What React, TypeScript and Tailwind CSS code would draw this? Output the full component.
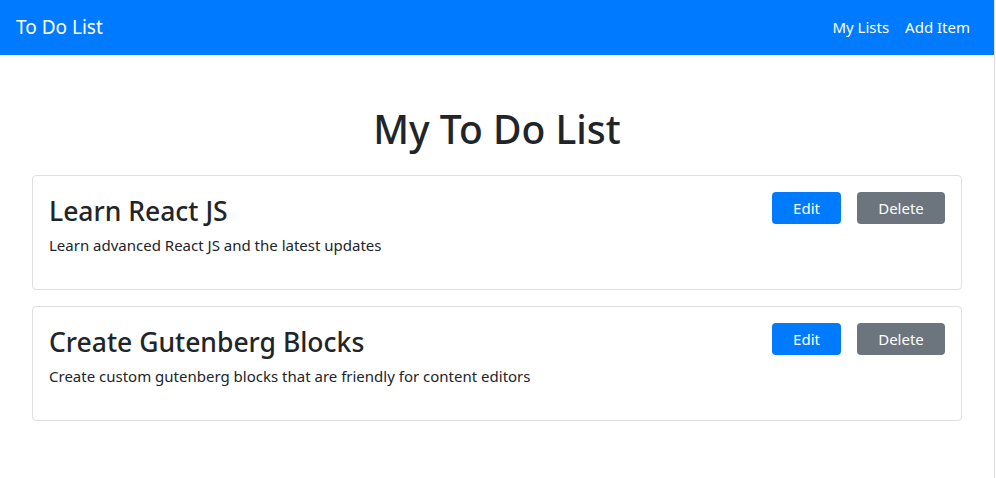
const todos = [
    { id: 1, title: 'Learn React JS', description: 'Learn advanced React JS and the latest updates' },
    { id: 2, title: 'Create Gutenberg Blocks', description: 'Create custom gutenberg blocks that are friendly for content editors' },
];

const App = () => {
    return (
        <div className="flex min-h-[478px] bg-white text-[#212529]" style={{ fontFamily: '"Noto Sans", "Open Sans", sans-serif' }}>
            <div className="w-[994px] shrink-0">
                <nav className="h-[55px] bg-[#007bff] flex items-center justify-between px-4">
                    <a href="#" className="text-white text-[19px] leading-none">To Do List</a>
                    <div className="flex items-center">
                        <a href="#" className="text-white text-[15px] px-2">My Lists</a>
                        <a href="#" className="text-white text-[15px] px-2">Add Item</a>
                    </div>
                </nav>

                <div className="w-[930px] mx-auto">
                    <h1 className="text-[39px] leading-[48px] font-medium text-center mt-[50px] mb-[22px]">My To Do List</h1>

                    <div className="space-y-4">
                        {todos.map((todo) => (
                            <div key={todo.id} className="border border-[#dfdfdf] rounded-[4px] p-4 h-[115px]">
                                <div className="flex justify-between items-start">
                                    <div>
                                        <h3 className="text-[26.5px] leading-[34px] font-medium mt-[2px] mb-[5px]">{todo.title}</h3>
                                        <p className="text-[15px] leading-6">{todo.description}</p>
                                    </div>
                                    <div className="flex gap-4">
                                        <button className="h-8 w-[69px] rounded-[4px] bg-[#007bff] text-white text-[15px]">Edit</button>
                                        <button className="h-8 w-[88px] rounded-[4px] bg-[#6c757d] text-white text-[15px]">Delete</button>
                                    </div>
                                </div>
                            </div>
                        ))}
                    </div>
                </div>
            </div>
            <div className="w-[2px] border-l border-[#dcdcdc]" />
        </div>
    );
};

export default App;
